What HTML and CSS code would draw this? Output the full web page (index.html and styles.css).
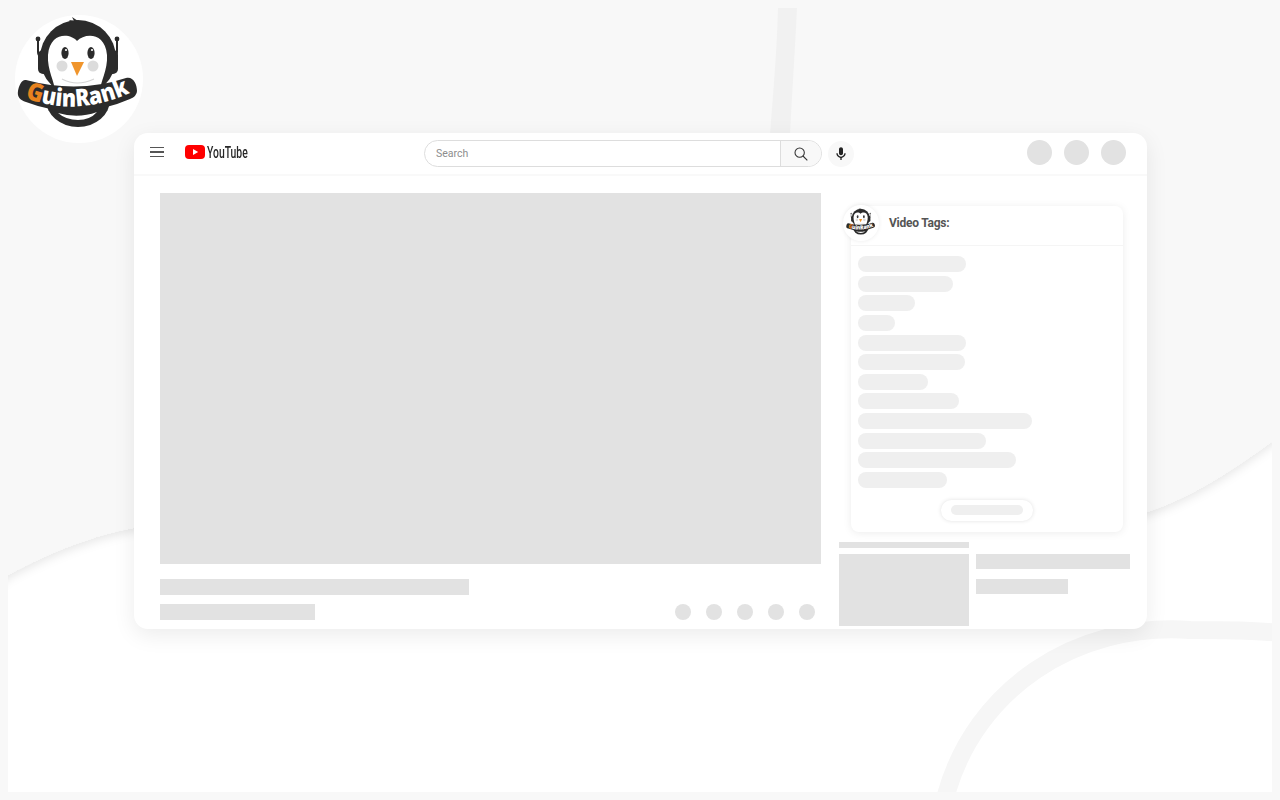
FILE: index.html
```html
<!DOCTYPE html>
<html lang="en">
<head>
    <meta charset="UTF-8">
    <meta name="viewport" content="width=device-width, initial-scale=1.0">
    <title>GuinRank Video Tags</title>
    <link rel="stylesheet" href="styles.css">
</head>
<body>
    <!-- background shapes -->
    <svg class="backdrop" width="1280" height="800" viewBox="0 0 1280 800" aria-hidden="true">
        <defs>
            <clipPath id="innerClip"><rect x="8" y="8" width="1264" height="784"/></clipPath>
            <filter id="curveShadow" x="-5%" y="-5%" width="110%" height="120%">
                <feDropShadow dx="0" dy="4" stdDeviation="5" flood-color="#000" flood-opacity="0.09"/>
            </filter>
        </defs>
        <g clip-path="url(#innerClip)">
            <rect x="8" y="8" width="1264" height="784" fill="#fff"/>
            <path filter="url(#curveShadow)" fill="#f8f8f8" d="M-10 590 L8 575 C50 552 95 535 133 528 C400 480 900 590 1147 512 C1190 498 1235 470 1290 428 L1290 -10 L-10 -10 Z"/>
            <path fill="#f1f1f1" d="M778 8 H797 C795 50 792 95 790 135 H770 C773 95 777 50 778 8 Z"/>
            <path fill="none" stroke="#f6f6f6" stroke-width="18" d="M946 795 C975 690 1075 622 1190 630 C1225 630 1255 630 1290 634"/>
        </g>
    </svg>

    <svg class="logo-big" width="128" height="128" viewBox="15 15 128 128" role="img" aria-label="GuinRank">
        <defs>
            <symbol id="guinrank" viewBox="15 15 128 128">
                <circle cx="79" cy="79" r="64" fill="#fff"/>
                <path fill="none" stroke="#2b2b2b" stroke-width="2" d="M38 39 V52 Q38 56 42 58 M117 39 V52 Q117 56 113 58"/>
                <circle cx="38" cy="39" r="2.4" fill="#2b2b2b"/>
                <circle cx="117" cy="39" r="2.4" fill="#2b2b2b"/>
                <rect x="38" y="50" width="12" height="24" rx="5" fill="#2b2b2b"/>
                <rect x="106" y="50" width="12" height="24" rx="5" fill="#2b2b2b"/>
                <polygon fill="#2b2b2b" points="68,24 72,23 69,20 74,21 72,17 78,21 86,24 74,30"/>
                <ellipse cx="78" cy="58" rx="38" ry="38" fill="#2b2b2b"/>
                <ellipse cx="78" cy="100" rx="32" ry="27" fill="#2b2b2b"/>
                <path fill="#fff" d="M77 41 C70 33 50 32 48 55 C47 70 55 82 55 92 H100 C100 82 108 70 107 55 C105 32 85 33 77 41 Z"/>
                <ellipse cx="65" cy="53" rx="3.6" ry="6" fill="#2b2b2b"/>
                <ellipse cx="91" cy="53" rx="3.6" ry="6" fill="#2b2b2b"/>
                <circle cx="66" cy="50" r="1.1" fill="#fff"/>
                <circle cx="92" cy="50" r="1.1" fill="#fff"/>
                <circle cx="62" cy="66" r="5.5" fill="#dcdcdc"/>
                <circle cx="93" cy="66" r="5.5" fill="#dcdcdc"/>
                <path fill="none" stroke="#d5d5d5" stroke-width="1.2" d="M62 79 Q77 87 94 79"/>
                <polygon fill="#f0952c" points="71,62 84,62 77,76"/>
                <path fill="#2b2b2b" d="M26 80 Q78 94 126 78 C133 76 137 84 137 91 Q137 96 130 99 Q78 122 26 102 C20 100 17 97 18 91 C19 85 22 79 26 80 Z"/>
                <path fill="#fff" d="M58 113 Q78 119 97 112 Q90 120 78 120 Q66 120 58 113 Z"/>
                <path id="bandLine" fill="none" d="M25 98 Q78 118 134 91"/>
                <text class="logo-text"><textPath href="#bandLine" textLength="108" lengthAdjust="spacingAndGlyphs"><tspan class="logo-g">G</tspan>uinRank</textPath></text>
            </symbol>
        </defs>
        <use href="#guinrank" x="15" y="15" width="128" height="128"/>
    </svg>

    <div class="window">
        <header class="topbar">
            <div class="burger"><span></span><span></span><span></span></div>
            <div class="yt-logo">
                <svg width="20" height="14" viewBox="0 0 20 14" aria-hidden="true">
                    <rect width="20" height="14" rx="4" fill="#f00"/>
                    <polygon points="8,4 8,10 13.2,7" fill="#fff"/>
                </svg>
                <span class="yt-text">YouTube</span>
            </div>
            <div class="search">
                <div class="search-input">Search</div>
                <div class="search-btn">
                    <svg width="16" height="16" viewBox="0 0 24 24" fill="none" stroke="#333" stroke-width="1.6"><circle cx="10" cy="10" r="7"/><path d="M15 15 L21.5 21.5"/></svg>
                </div>
            </div>
            <div class="mic">
                <svg width="16" height="16" viewBox="0 0 24 24" fill="#222"><path d="M12 14c1.66 0 3-1.34 3-3V5c0-1.66-1.34-3-3-3S9 3.34 9 5v6c0 1.66 1.34 3 3 3zm5-3c0 2.76-2.24 5-5 5s-5-2.24-5-5H5c0 3.53 2.61 6.43 6 6.92V21h2v-3.08c3.39-.49 6-3.39 6-6.92h-2z"/></svg>
            </div>
            <div class="top-icons"><span></span><span></span><span></span></div>
        </header>

        <div class="content">
            <main class="player-col">
                <div class="player"></div>
                <div class="bar title-bar"></div>
                <div class="meta-row">
                    <div class="bar channel-bar"></div>
                    <div class="actions"><span></span><span></span><span></span><span></span><span></span></div>
                </div>
            </main>

            <aside class="side-col">
                <section class="tags-panel">
                    <svg class="logo-small" width="36" height="36" viewBox="-3 -3 42 42" aria-hidden="true"><use href="#guinrank" width="36" height="36"/></svg>
                    <div class="tags-head">Video Tags:</div>
                    <div class="tags-list">
                        <div class="pill" style="width:108px"></div>
                        <div class="pill" style="width:95px"></div>
                        <div class="pill" style="width:57px"></div>
                        <div class="pill" style="width:37px"></div>
                        <div class="pill" style="width:108px"></div>
                        <div class="pill" style="width:107px"></div>
                        <div class="pill" style="width:70px"></div>
                        <div class="pill" style="width:101px"></div>
                        <div class="pill" style="width:174px"></div>
                        <div class="pill" style="width:128px"></div>
                        <div class="pill" style="width:158px"></div>
                        <div class="pill" style="width:89px"></div>
                    </div>
                    <div class="tags-foot"><div class="more-btn"><span></span></div></div>
                </section>
                <div class="bar next-label"></div>
                <div class="next-row">
                    <div class="thumb"></div>
                    <div class="next-text">
                        <div class="bar next-title"></div>
                        <div class="bar next-sub"></div>
                    </div>
                </div>
            </aside>
        </div>
    </div>
</body>
</html>
```

FILE: styles.css
```css
html, body {
    margin: 0;
    height: 800px;
    overflow: hidden;
}
body {
    position: relative;
    background: #f8f8f8;
    font-family: Roboto, "Liberation Sans", sans-serif;
    padding: 133px 133px 0 134px;
    box-sizing: border-box;
}
.backdrop {
    position: absolute;
    left: 0;
    top: 0;
}
.logo-big {
    position: absolute;
    left: 15px;
    top: 15px;
}
.logo-text {
    font-family: "Open Sans", sans-serif;
    font-weight: 800;
    font-size: 24px;
    fill: #fff;
}
.logo-g {
    fill: #e8821e;
    font-size: 25px;
}

.window {
    position: relative;
    width: 1013px;
    height: 496px;
    background: #fff;
    border-radius: 14px;
    box-shadow: 0 6px 22px rgba(0,0,0,0.08);
    overflow: hidden;
}

/* top bar */
.topbar {
    display: flex;
    align-items: center;
    height: 41px;
    border-bottom: 2px solid #f9f9f9;
    padding-left: 16px;
}
.burger {
    display: flex;
    flex-direction: column;
    gap: 3.4px;
    width: 14px;
    margin-right: 21px;
    margin-bottom: 3px;
}
.burger span {
    height: 1.4px;
    background: #555;
}
.yt-logo {
    display: flex;
    align-items: center;
    gap: 2px;
    width: 239px;
    margin-bottom: 3px;
}
.yt-text {
    font-weight: 500;
    font-size: 17px;
    line-height: 16px;
    color: #282828;
    transform: scaleX(0.61);
    transform-origin: left center;
}
.search {
    display: flex;
    width: 398px;
    height: 27px;
    box-sizing: border-box;
    border: 1px solid #ddd;
    border-radius: 14px;
    overflow: hidden;
}
.search-input {
    flex: 1;
    padding-left: 11px;
    font-size: 10.5px;
    line-height: 25px;
    color: #8d8d8d;
}
.search-btn {
    display: flex;
    align-items: center;
    justify-content: center;
    width: 40px;
    background: #f8f8f8;
    border-left: 1px solid #ddd;
}
.mic {
    display: flex;
    align-items: center;
    justify-content: center;
    width: 26px;
    height: 26px;
    margin-left: 6px;
    border-radius: 50%;
    background: #f8f8f8;
}
.top-icons {
    display: flex;
    gap: 12px;
    margin-left: auto;
    margin-right: 21px;
    margin-bottom: 3px;
}
.top-icons span {
    width: 25px;
    height: 25px;
    border-radius: 50%;
    background: #e2e2e2;
}

/* main area */
.content {
    display: flex;
    gap: 18px;
    padding: 17px 0 0 26px;
}
.player-col {
    width: 661px;
}
.player {
    height: 371px;
    background: #e2e2e2;
}
.bar {
    background: #e2e2e2;
}
.title-bar {
    width: 309px;
    height: 16px;
    margin-top: 15px;
}
.meta-row {
    display: flex;
    justify-content: space-between;
    align-items: center;
    margin-top: 9px;
    padding-right: 6px;
}
.channel-bar {
    width: 155px;
    height: 16px;
}
.actions {
    display: flex;
    gap: 15px;
}
.actions span {
    width: 16px;
    height: 16px;
    border-radius: 50%;
    background: #e2e2e2;
}

/* tags panel */
.side-col {
    width: 291px;
}
.tags-panel {
    position: relative;
    width: 272px;
    height: 326px;
    margin: 13px 0 0 12px;
    background: #fff;
    border-radius: 8px;
    box-shadow: 0 1px 8px rgba(0,0,0,0.08);
}
.logo-small {
    position: absolute;
    left: -8px;
    top: -1px;
    border-radius: 50%;
    background: #fff;
    box-shadow: 0 0 4px rgba(0,0,0,0.08);
}
.tags-head {
    height: 39px;
    padding-left: 38px;
    line-height: 34px;
    font-size: 12px;
    letter-spacing: -0.25px;
    font-weight: 700;
    color: #555;
    border-bottom: 1px solid #f5f5f5;
}
.tags-list {
    display: flex;
    flex-direction: column;
    gap: 3.64px;
    padding: 10px 7px 0;
}
.pill {
    height: 16px;
    border-radius: 8px;
    background: #efefef;
}
.tags-foot {
    display: flex;
    justify-content: center;
    margin-top: 12px;
}
.more-btn {
    display: flex;
    align-items: center;
    justify-content: center;
    width: 92px;
    height: 21px;
    border-radius: 11px;
    background: #fff;
    box-shadow: 0 0 4px rgba(0,0,0,0.12);
}
.more-btn span {
    width: 72px;
    height: 10px;
    border-radius: 5px;
    background: #efefef;
}

/* next video */
.next-label {
    width: 130px;
    height: 6px;
    margin-top: 10px;
}
.next-row {
    display: flex;
    gap: 7px;
    margin-top: 6px;
}
.thumb {
    width: 130px;
    height: 72px;
    background: #e2e2e2;
}
.next-text {
    flex: 1;
}
.next-title {
    width: 154px;
    height: 15px;
}
.next-sub {
    width: 92px;
    height: 15px;
    margin-top: 10px;
}
```
